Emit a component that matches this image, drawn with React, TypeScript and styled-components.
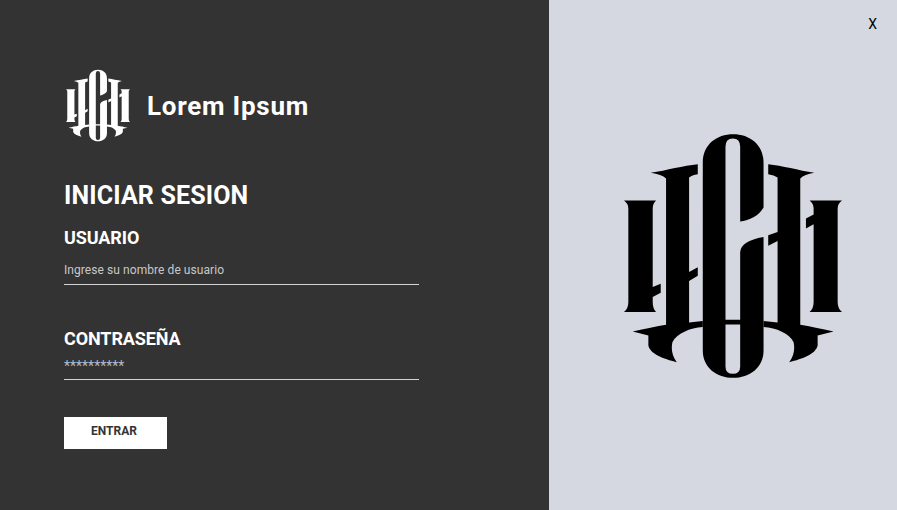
import React from "react";
import styled, { createGlobalStyle } from "styled-components";

const GlobalStyle = createGlobalStyle`
  html, body {
    margin: 0;
    padding: 0;
    height: 100%;
    font-family: Roboto, "Liberation Sans", sans-serif;
  }
`;

const Page = styled.div`
  display: flex;
  width: 100%;
  height: 100vh;
  overflow: hidden;
`;

const LoginPanel = styled.div`
  box-sizing: border-box;
  width: 549px;
  background-color: #333333;
  padding: 69px 0 0 64px;
  color: #fff;
`;

const Brand = styled.div`
  display: flex;
  align-items: center;
  gap: 17px;
  height: 73px;
  padding-left: 2px;
  margin-bottom: 40px;
`;

const BrandName = styled.span`
  font-size: 26px;
  font-weight: 700;
  letter-spacing: 0.75px;
`;

const Title = styled.h1`
  margin: 0 0 17px;
  font-size: 25px;
  line-height: 28px;
  font-weight: 700;
  letter-spacing: 0.15px;
`;

const Fields = styled.div`
  display: flex;
  flex-direction: column;
  gap: 43px;
  width: 355px;
`;

const Label = styled.label`
  display: block;
  font-size: 18px;
  line-height: 21px;
  font-weight: 700;
  letter-spacing: -0.1px;
`;

const FieldValue = styled.div<{ $secret?: boolean }>`
  box-sizing: border-box;
  height: ${(p) => (p.$secret ? "31px" : "37px")};
  padding-top: ${(p) => (p.$secret ? "10px" : "15px")};
  font-size: ${(p) => (p.$secret ? "14px" : "12px")};
  line-height: 15px;
  letter-spacing: ${(p) => (p.$secret ? "0" : "0.07px")};
  color: ${(p) => (p.$secret ? "#b4bcc8" : "#c8c8c8")};
  border-bottom: 1px solid #d2d2d2;
`;

const EnterButton = styled.button`
  display: block;
  width: 103px;
  height: 32px;
  margin-top: 37px;
  padding: 0 3px 4px 0;
  border: 0;
  background-color: #fff;
  color: #333333;
  font-family: inherit;
  font-size: 12px;
  font-weight: 700;
`;

const ArtPanel = styled.div`
  position: relative;
  flex: 1;
  display: flex;
  justify-content: flex-end;
  align-items: flex-start;
  padding: 134px 55px 0 0;
  background-color: #d5d8e0;
`;

const CloseButton = styled.button`
  position: absolute;
  top: 15px;
  right: 20px;
  padding: 0;
  border: 0;
  background: none;
  color: #000;
  font-family: inherit;
  font-size: 14px;
  line-height: 18px;
`;

const LogoSvg = styled.svg<{ $color: string }>`
  display: block;
  flex-shrink: 0;
  fill: ${(p) => p.$color};
`;

const Logo: React.FC<{ width: number; height: number; color: string }> = ({
  width,
  height,
  color,
}) => (
  <LogoSvg
    $color={color}
    width={width}
    height={height}
    viewBox="42 42 653 730"
    aria-hidden="true"
  >
    {/* center stencil letter */}
    <path
      fillRule="evenodd"
      d="M278 128C278 72 320 42 369 42C418 42 460 72 460 128L460 262C445 288 418 300 390 304L390 80Q390 55 368 55Q346 55 346 80L346 598L390 598L390 395Q392 362 460 350L460 690C460 742 418 772 369 772C320 772 278 742 278 690ZM346 612L346 738Q346 760 368 760Q390 760 390 738L390 612Z"
    />
    {/* left stem */}
    <path d="M122 158C170 150 220 136 263 132L263 162Q245 165 237 172L237 455L263 441L263 466L237 482L237 606L278 602L278 620C240 622 200 640 187 665C183 685 185 705 200 725C160 715 120 700 115 675L115 645L68 633C105 625 140 618 168 613L168 175Q155 163 122 158Z" />
    {/* right stem */}
    <path d="M612 158C565 150 515 136 474 132L474 162Q492 165 502 172L502 335L474 345L474 376L502 362L502 606L460 602L460 620C498 622 538 640 550 665C554 685 552 705 537 725C577 715 617 700 622 675L622 645L670 633C633 625 598 618 570 613L570 175Q582 163 612 158Z" />
    {/* left bar */}
    <path d="M42 241L138 241Q128 250 128 265L128 500L152 490L152 517L128 530L128 545Q128 565 138 575L42 575Q55 565 55 545L55 265Q55 250 42 241Z" />
    {/* right bar */}
    <path d="M695 241L598 241Q610 250 610 265L610 283L587 295L587 325L610 312L610 545Q610 565 598 575L695 575Q682 565 682 545L682 265Q682 250 695 241Z" />
  </LogoSvg>
);

const App: React.FC = () => {
  return (
    <Page>
      <GlobalStyle />
      <LoginPanel>
        <Brand>
          <Logo width={64} height={73} color="#fff" />
          <BrandName>Lorem Ipsum</BrandName>
        </Brand>
        <Title>INICIAR SESION</Title>
        <Fields>
          <div>
            <Label>USUARIO</Label>
            <FieldValue>Ingrese su nombre de usuario</FieldValue>
          </div>
          <div>
            <Label>CONTRASEÑA</Label>
            <FieldValue $secret>**********</FieldValue>
          </div>
        </Fields>
        <EnterButton>ENTRAR</EnterButton>
      </LoginPanel>
      <ArtPanel>
        <CloseButton>X</CloseButton>
        <Logo width={218} height={244} color="#000" />
      </ArtPanel>
    </Page>
  );
};

export default App;
